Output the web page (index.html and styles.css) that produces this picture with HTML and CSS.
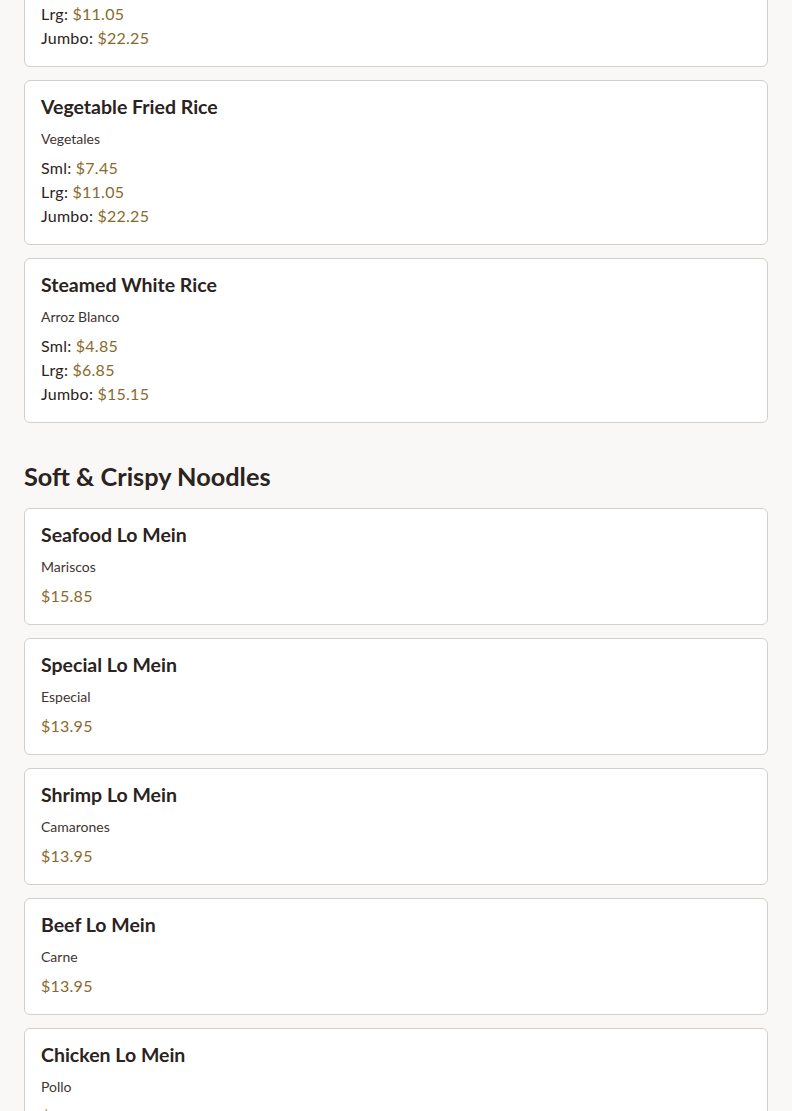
FILE: index.html
```html
<!DOCTYPE html>
<html lang="en">
<head>
    <meta charset="UTF-8">
    <meta name="viewport" content="width=device-width, initial-scale=1.0">
    <title>Menu</title>
    <link rel="stylesheet" href="styles.css">
</head>
<body>
    <div class="menu">
        <section class="section section-cut">
            <div class="card">
                <h3 class="item-name">Chicken Fried Rice</h3>
                <p class="item-desc">Pollo</p>
                <div class="price-line">Sml: <span class="price">$7.45</span></div>
                <div class="price-line">Lrg: <span class="price">$11.05</span></div>
                <div class="price-line">Jumbo: <span class="price">$22.25</span></div>
            </div>
            <div class="card">
                <h3 class="item-name">Vegetable Fried Rice</h3>
                <p class="item-desc">Vegetales</p>
                <div class="price-line">Sml: <span class="price">$7.45</span></div>
                <div class="price-line">Lrg: <span class="price">$11.05</span></div>
                <div class="price-line">Jumbo: <span class="price">$22.25</span></div>
            </div>
            <div class="card">
                <h3 class="item-name">Steamed White Rice</h3>
                <p class="item-desc">Arroz Blanco</p>
                <div class="price-line">Sml: <span class="price">$4.85</span></div>
                <div class="price-line">Lrg: <span class="price">$6.85</span></div>
                <div class="price-line">Jumbo: <span class="price">$15.15</span></div>
            </div>
        </section>

        <section class="section">
            <h2 class="section-title">Soft &amp; Crispy Noodles</h2>
            <div class="card">
                <h3 class="item-name">Seafood Lo Mein</h3>
                <p class="item-desc">Mariscos</p>
                <div class="price-line"><span class="price">$15.85</span></div>
            </div>
            <div class="card">
                <h3 class="item-name">Special Lo Mein</h3>
                <p class="item-desc">Especial</p>
                <div class="price-line"><span class="price">$13.95</span></div>
            </div>
            <div class="card">
                <h3 class="item-name">Shrimp Lo Mein</h3>
                <p class="item-desc">Camarones</p>
                <div class="price-line"><span class="price">$13.95</span></div>
            </div>
            <div class="card">
                <h3 class="item-name">Beef Lo Mein</h3>
                <p class="item-desc">Carne</p>
                <div class="price-line"><span class="price">$13.95</span></div>
            </div>
            <div class="card">
                <h3 class="item-name">Chicken Lo Mein</h3>
                <p class="item-desc">Pollo</p>
                <div class="price-line"><span class="price">$13.95</span></div>
            </div>
        </section>
    </div>
</body>
</html>
```

FILE: styles.css
```css
body {
    margin: 0;
    background-color: #faf8f6;
    font-family: "Lato", "Noto Sans", sans-serif;
    color: #2b2320;
}

.menu {
    padding: 0 24px;
}

.section-cut {
    margin-top: -98px;
}

.section {
    margin-bottom: 37px;
}

.section-title {
    font-size: 25.3px;
    font-weight: 700;
    margin: 0 0 16px;
    line-height: 32px;
}

.card {
    background-color: #fff;
    border: 1px solid #d3cfca;
    border-radius: 6px;
    padding: 16px;
    margin-bottom: 13px;
}

.item-name {
    font-size: 19.5px;
    font-weight: 700;
    line-height: 20px;
    margin: 0 0 12px;
}

.item-desc {
    font-size: 14px;
    line-height: 20px;
    margin: 0 0 7px;
    color: #3f3532;
}

.price-line {
    font-size: 16px;
    line-height: 24px;
    letter-spacing: 0.25px;
}

.price {
    color: #8a6a2c;
}
```
